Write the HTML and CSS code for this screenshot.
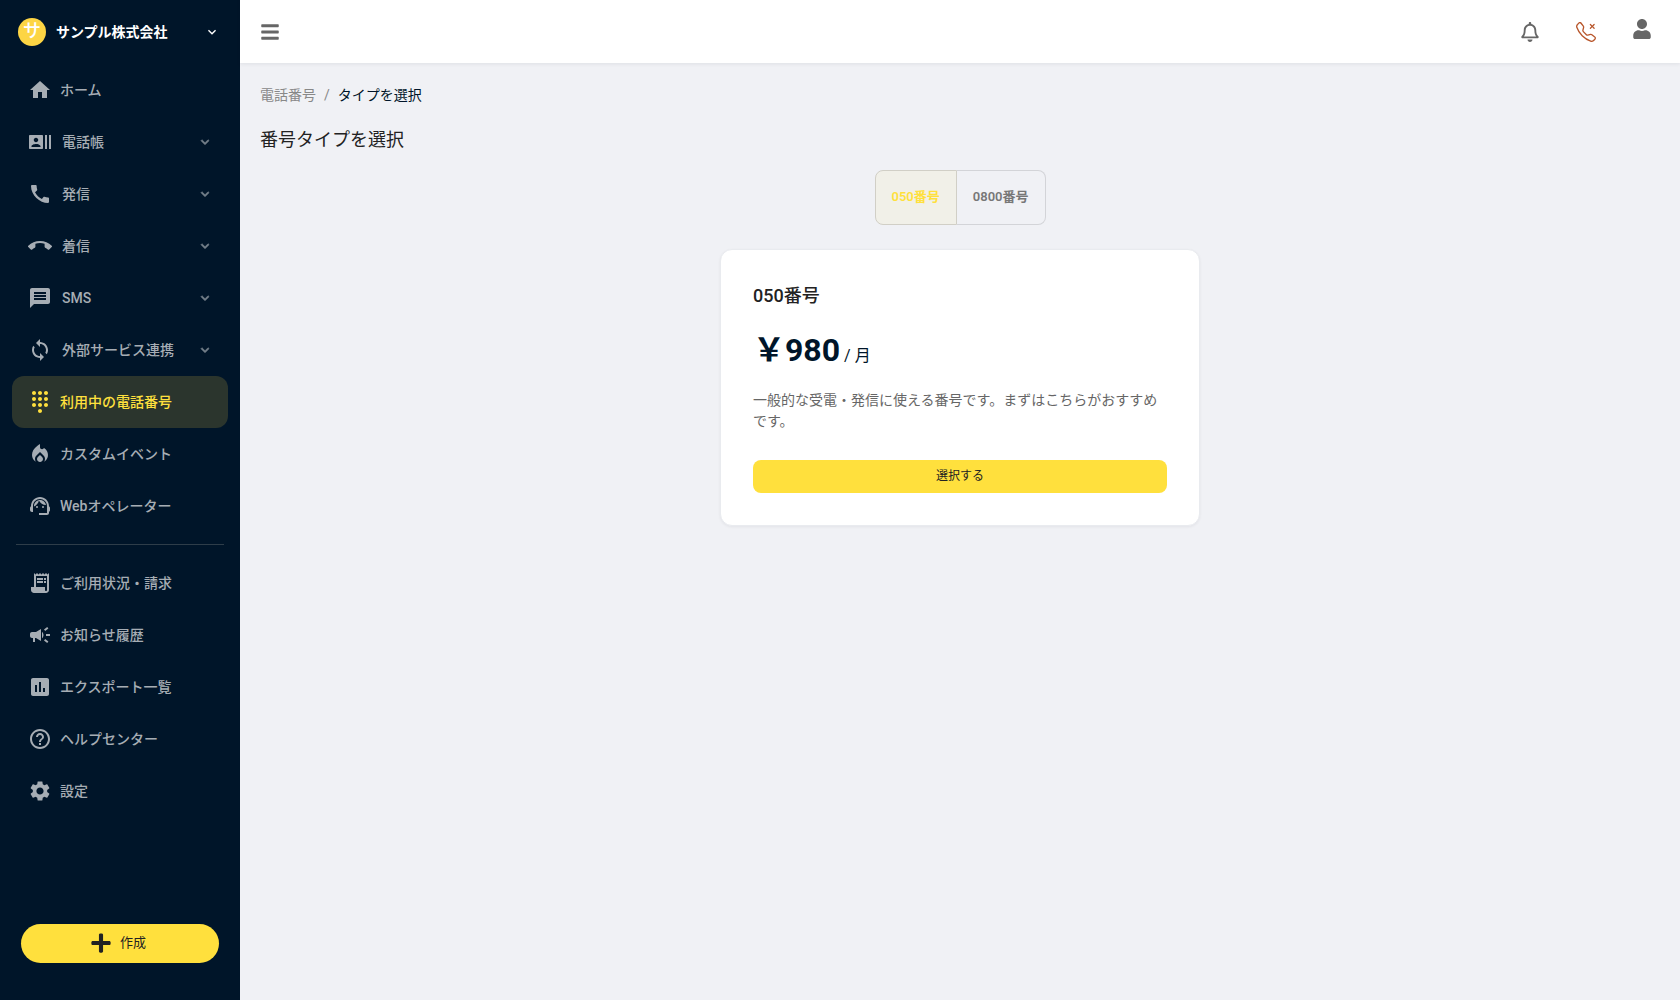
FILE: index.html
```html
<!DOCTYPE html>
<html lang="ja">
<head>
<meta charset="utf-8">
<meta name="viewport" content="width=device-width, initial-scale=1">
<title>番号タイプを選択</title>
<link rel="stylesheet" href="styles.css">
</head>
<body>
<div class="app">
  <aside class="sidebar">
    <button type="button" class="company">
      <span class="avatar">サ</span>
      <span class="company-name">サンプル株式会社</span>
      <svg class="chevron" viewBox="0 0 24 24"><path d="M7.41 8.59 12 13.17l4.59-4.58L18 10l-6 6-6-6z"/></svg>
    </button>
    <nav class="nav">
      <a class="nav-item" href="#"><svg class="icon" viewBox="0 0 24 24"><path d="M10 20v-6h4v6h5v-8h3L12 3 2 12h3v8z"/></svg><span>ホーム</span></a>
      <button type="button" class="nav-item nav-group"><svg class="icon" viewBox="0 0 24 24"><path d="M21 5v14h2V5h-2zm-4 14h2V5h-2v14zM14 5H2c-.55 0-1 .45-1 1v12c0 .55.45 1 1 1h12c.55 0 1-.45 1-1V6c0-.55-.45-1-1-1zM8 7.75c1.24 0 2.25 1.01 2.25 2.25S9.24 12.25 8 12.25 5.75 11.24 5.75 10 6.76 7.75 8 7.75zM12.5 17h-9v-.75c0-1.5 3-2.25 4.5-2.25s4.500.75 4.500 2.250V17z"/></svg><span>電話帳</span><svg class="chevron" viewBox="0 0 24 24"><path d="M7.41 8.59 12 13.17l4.59-4.58L18 10l-6 6-6-6z"/></svg></button>
      <button type="button" class="nav-item nav-group"><svg class="icon" viewBox="0 0 24 24"><path d="M20.010 15.380c-1.230 0-2.420-.2-3.530-.56-.35-.12-.74-.03-1.010.24l-1.570 1.970c-2.830-1.350-5.480-3.900-6.890-6.830l1.950-1.660c.27-.28.35-.67.240-1.020-.37-1.110-.56-2.300-.56-3.530 0-.54-.45-.99-.99-.99H4.190C3.650 3 3 3.240 3 3.990 3 13.280 11.730 21 20.010 21c.71 0 .99-.63.990-1.180v-3.450c0-.54-.45-.99-.99-.99z"/></svg><span>発信</span><svg class="chevron" viewBox="0 0 24 24"><path d="M7.410 8.590 12 13.170l4.590-4.580L18 10l-6 6-6-6z"/></svg></button>
      <button type="button" class="nav-item nav-group"><svg class="icon" viewBox="0 0 24 24"><path d="M12 9c-1.600 0-3.150.25-4.600.72v3.100c0 .39-.23.74-.56.9-.98.490-1.870 1.120-2.660 1.850-.18.180-.43.280-.70.280-.28 0-.53-.11-.71-.29L.290 13.080c-.18-.17-.29-.42-.29-.70 0-.28.110-.53.290-.71C3.340 8.780 7.460 7 12 7s8.660 1.780 11.710 4.670c.18.180.290.430.290.710 0 .28-.11.530-.29.710l-2.480 2.480c-.18.180-.43.290-.71.290-.27 0-.52-.11-.70-.28-.79-.74-1.690-1.360-2.670-1.850-.33-.16-.56-.50-.56-.90v-3.100C15.150 9.250 13.600 9 12 9z"/></svg><span>着信</span><svg class="chevron" viewBox="0 0 24 24"><path d="M7.410 8.590 12 13.170l4.590-4.580L18 10l-6 6-6-6z"/></svg></button>
      <button type="button" class="nav-item nav-group"><svg class="icon" viewBox="0 0 24 24"><path d="M20 2H4c-1.100 0-1.990.9-1.990 2L2 22l4-4h14c1.100 0 2-.9 2-2V4c0-1.100-.9-2-2-2zM6 6h12v2H6V6zm12 8H6v-2h12v2zm0-3H6V9h12v2z"/></svg><span>SMS</span><svg class="chevron" viewBox="0 0 24 24"><path d="M7.410 8.590 12 13.170l4.590-4.580L18 10l-6 6-6-6z"/></svg></button>
      <button type="button" class="nav-item nav-group"><svg class="icon" viewBox="0 0 24 24"><path d="M12 4V1L8 5l4 4V6c3.310 0 6 2.690 6 6 0 1.010-.25 1.970-.70 2.800l1.460 1.460C19.540 15.030 20 13.570 20 12c0-4.420-3.580-8-8-8zm0 14c-3.310 0-6-2.690-6-6 0-1.010.25-1.970.70-2.800L5.240 7.740C4.460 8.970 4 10.430 4 12c0 4.420 3.580 8 8 8v3l4-4-4-4v3z"/></svg><span>外部サービス連携</span><svg class="chevron" viewBox="0 0 24 24"><path d="M7.410 8.590 12 13.170l4.590-4.580L18 10l-6 6-6-6z"/></svg></button>
      <a class="nav-item active" href="#" aria-current="page"><svg class="icon" viewBox="0 0 24 24"><path d="M12 19c-1.100 0-2 .9-2 2s.9 2 2 2 2-.9 2-2-.9-2-2-2zM6 1c-1.100 0-2 .9-2 2s.9 2 2 2 2-.9 2-2-.9-2-2-2zm0 6c-1.100 0-2 .9-2 2s.9 2 2 2 2-.9 2-2-.9-2-2-2zm0 6c-1.100 0-2 .9-2 2s.9 2 2 2 2-.9 2-2-.9-2-2-2zm12-8c1.100 0 2-.9 2-2s-.9-2-2-2-2 .9-2 2 .9 2 2 2zm-6 8c-1.100 0-2 .9-2 2s.9 2 2 2 2-.9 2-2-.9-2-2-2zm6 0c-1.100 0-2 .9-2 2s.9 2 2 2 2-.9 2-2-.9-2-2-2zm0-6c-1.100 0-2 .9-2 2s.9 2 2 2 2-.9 2-2-.9-2-2-2zm-6 0c-1.100 0-2 .9-2 2s.9 2 2 2 2-.9 2-2-.9-2-2-2zm0-6c-1.100 0-2 .9-2 2s.9 2 2 2 2-.9 2-2-.9-2-2-2z"/></svg><span>利用中の電話番号</span></a>
      <a class="nav-item" href="#"><svg class="icon" viewBox="0 0 24 24"><path d="M12 12.900l-2.130 2.090C9.310 15.550 9 16.280 9 17.060 9 18.680 10.350 20 12 20s3-1.320 3-2.940c0-.78-.31-1.520-.87-2.070L12 12.900z"/><path d="M16 6l-.44.550C14.380 8.020 12 7.190 12 5.300V2S4 6 4 13c0 2.920 1.560 5.470 3.890 6.860-.56-.79-.89-1.760-.89-2.800 0-1.320.52-2.560 1.470-3.500L12 10.100l3.530 3.470c.95.930 1.470 2.170 1.470 3.500 0 1.020-.31 1.960-.85 2.750 1.890-1.150 3.290-3.060 3.710-5.300.66-3.550-1.070-6.900-3.860-8.520z"/></svg><span>カスタムイベント</span></a>
      <a class="nav-item" href="#"><svg class="icon" viewBox="0 0 24 24"><path d="M21 12.220C21 6.730 16.740 3 12 3c-4.690 0-9 3.650-9 9.280-.60.340-1 .98-1 1.720v2c0 1.100.9 2 2 2h1v-6.100c0-3.870 3.130-7 7-7s7 3.130 7 7V19h-8v2h8c1.100 0 2-.9 2-2v-1.220c.59-.31 1-.92 1-1.640v-2.300c0-.70-.41-1.310-1-1.620z"/><circle cx="9" cy="13" r="1"/><circle cx="15" cy="13" r="1"/><path d="M18 11.030C17.520 8.180 15.040 6 12.050 6c-3.030 0-6.290 2.510-6.030 6.450 2.470-1.010 4.330-3.210 4.860-5.890 1.310 2.630 4 4.440 7.120 4.470z"/></svg><span>Webオペレーター</span></a>
      <hr class="divider">
      <a class="nav-item" href="#"><svg class="icon" viewBox="0 0 24 24"><path d="M19.500 3.500 18 2l-1.500 1.500L15 2l-1.500 1.500L12 2l-1.500 1.500L9 2 7.500 3.500 6 2v14H3v3c0 1.660 1.340 3 3 3h12c1.660 0 3-1.340 3-3V2l-1.500 1.500zM19 19c0 .55-.45 1-1 1s-1-.45-1-1v-3H8V5h11v14z"/><path d="M9 7h6v2H9zm7 0h2v2h-2zm-7 3h6v2H9zm7 0h2v2h-2z"/></svg><span>ご利用状況・請求</span></a>
      <a class="nav-item" href="#"><svg class="icon" viewBox="0 0 24 24"><path d="M18 11v2h4v-2h-4zm-2 6.610c.96.710 2.210 1.650 3.200 2.390.40-.53.80-1.070 1.200-1.600-.99-.74-2.240-1.680-3.200-2.400-.40.540-.80 1.080-1.200 1.610zM20.400 5.600c-.40-.53-.80-1.070-1.200-1.600-.99.740-2.240 1.680-3.200 2.400.40.530.80 1.070 1.200 1.600.96-.72 2.210-1.650 3.200-2.400zM4 9c-1.100 0-2 .9-2 2v2c0 1.100.9 2 2 2h1v4h2v-4h1l5 3V6L8 9H4zm11.500 3c0-1.330-.58-2.530-1.500-3.350v6.690c.92-.81 1.500-2.010 1.500-3.340z"/></svg><span>お知らせ履歴</span></a>
      <a class="nav-item" href="#"><svg class="icon" viewBox="0 0 24 24"><path d="M19 3H5c-1.100 0-2 .9-2 2v14c0 1.100.9 2 2 2h14c1.100 0 2-.9 2-2V5c0-1.100-.9-2-2-2zM9 17H7v-7h2v7zm4 0h-2V7h2v10zm4 0h-2v-4h2v4z"/></svg><span>エクスポート一覧</span></a>
      <a class="nav-item" href="#"><svg class="icon" viewBox="0 0 24 24"><path d="M11 18h2v-2h-2v2zm1-16C6.480 2 2 6.480 2 12s4.480 10 10 10 10-4.480 10-10S17.520 2 12 2zm0 18c-4.410 0-8-3.590-8-8s3.590-8 8-8 8 3.590 8 8-3.590 8-8 8zm0-14c-2.210 0-4 1.790-4 4h2c0-1.100.9-2 2-2s2 .9 2 2c0 2-3 1.750-3 5h2c0-2.250 3-2.500 3-5 0-2.210-1.790-4-4-4z"/></svg><span>ヘルプセンター</span></a>
      <a class="nav-item" href="#"><svg class="icon" viewBox="0 0 24 24"><path d="M19.140 12.940c.04-.30.060-.61.060-.94 0-.32-.02-.64-.07-.94l2.030-1.580c.18-.14.230-.41.120-.61l-1.920-3.320c-.12-.22-.37-.29-.59-.22l-2.390.960c-.50-.38-1.030-.70-1.620-.94l-.36-2.540c-.04-.24-.24-.41-.48-.41h-3.840c-.24 0-.43.170-.47.410l-.36 2.540c-.59.240-1.130.570-1.620.940l-2.390-.96c-.22-.08-.47 0-.59.220L2.740 8.870c-.12.210-.08.470.12.610l2.030 1.580c-.05.300-.09.630-.09.940s.02.640.07.940l-2.030 1.580c-.18.140-.23.410-.12.610l1.920 3.320c.12.220.37.290.59.220l2.390-.96c.50.380 1.030.70 1.620.940l.36 2.540c.05.240.24.410.48.410h3.840c.24 0 .44-.17.470-.41l.36-2.540c.59-.24 1.130-.56 1.620-.94l2.390.960c.22.080.47 0 .59-.22l1.920-3.320c.12-.22.07-.47-.12-.61l-2.010-1.580zM12 15.600c-1.980 0-3.600-1.620-3.600-3.600s1.620-3.600 3.600-3.600 3.600 1.620 3.600 3.600-1.620 3.600-3.600 3.600z"/></svg><span>設定</span></a>
    </nav>
    <button type="button" class="create">
      <svg class="create-icon" viewBox="0 0 448 512"><path d="M416 208H272V64c0-17.670-14.330-32-32-32h-32c-17.670 0-32 14.330-32 32v144H32c-17.670 0-32 14.330-32 32v32c0 17.670 14.330 32 32 32h144v144c0 17.670 14.330 32 32 32h32c17.670 0 32-14.330 32-32V304h144c17.670 0 32-14.330 32-32v-32c0-17.670-14.330-32-32-32z"/></svg>
      <span>作成</span>
    </button>
  </aside>
  <div class="page">
    <header class="topbar">
      <button type="button" class="tool" aria-label="メニュー"><svg viewBox="0 0 448 512"><path d="M16 132h416c8.837 0 16-7.163 16-16V76c0-8.837-7.163-16-16-16H16C7.163 60 0 67.163 0 76v40c0 8.837 7.163 16 16 16zm0 160h416c8.837 0 16-7.163 16-16v-40c0-8.837-7.163-16-16-16H16c-8.837 0-16 7.163-16 16v40c0 8.837 7.163 16 16 16zm0 160h416c8.837 0 16-7.163 16-16v-40c0-8.837-7.163-16-16-16H16c-8.837 0-16 7.163-16 16v40c0 8.837 7.163 16 16 16z"/></svg></button>
      <div class="tools">
        <button type="button" class="tool" aria-label="通知"><svg viewBox="0 0 448 512"><path d="M439.390 362.290c-19.320-20.760-55.470-51.990-55.470-154.290 0-77.700-54.480-139.900-127.940-155.160V32c0-17.670-14.320-32-31.980-32s-31.980 14.330-31.980 32v20.840C118.560 68.100 64.080 130.300 64.080 208c0 102.300-36.150 133.530-55.470 154.290-6 6.450-8.660 14.160-8.610 21.710.11 16.400 12.980 32 32.100 32h383.800c19.120 0 32-15.600 32.100-32 .05-7.550-2.610-15.270-8.610-21.710zM67.530 368c21.220-27.970 44.420-74.330 44.530-159.420 0-.2-.06-.38-.06-.58 0-61.860 50.140-112 112-112s112 50.140 112 112c0 .2-.06.380-.06.580.11 85.100 23.310 131.460 44.530 159.420H67.530zM224 512c35.320 0 63.970-28.650 63.970-64H160.030c0 35.350 28.650 64 63.970 64z"/></svg></button>
        <button type="button" class="tool tool-phone" aria-label="電話オフライン"><svg viewBox="0 0 16 16"><path d="M3.654 1.328a.678.678 0 0 0-1.015-.063L1.605 2.300c-.483.484-.661 1.169-.45 1.770a17.568 17.568 0 0 0 4.168 6.608 17.569 17.569 0 0 0 6.608 4.168c.601.211 1.286.033 1.770-.45l1.034-1.034a.678.678 0 0 0-.063-1.015l-2.307-1.794a.678.678 0 0 0-.58-.122l-2.190.547a1.745 1.745 0 0 1-1.657-.459L5.482 8.062a1.745 1.745 0 0 1-.46-1.657l.548-2.190a.678.678 0 0 0-.122-.58L3.654 1.328zM1.884.511a1.745 1.745 0 0 1 2.612.163L6.290 2.980c.329.423.445.974.315 1.494l-.547 2.190a.678.678 0 0 0 .178.643l2.457 2.457a.678.678 0 0 0 .644.178l2.189-.547a1.745 1.745 0 0 1 1.494.315l2.306 1.794c.829.645.905 1.870.163 2.611l-1.034 1.034c-.74.740-1.846 1.065-2.877.702a18.634 18.634 0 0 1-7.010-4.420 18.634 18.634 0 0 1-4.420-7.009c-.362-1.030-.037-2.137.703-2.877L1.885.511z"/><path d="M11.146 1.646a.5.5 0 0 1 .708 0L13 2.793l1.146-1.147a.5.5 0 0 1 .708.708L13.707 3.500l1.147 1.146a.5.5 0 0 1-.708.708L13 4.207l-1.146 1.147a.5.5 0 0 1-.708-.708L12.293 3.500l-1.147-1.146a.5.5 0 0 1 0-.708z"/></svg></button>
        <button type="button" class="tool tool-user" aria-label="アカウント"><svg viewBox="0 0 448 512"><path d="M224 256c70.700 0 128-57.300 128-128S294.700 0 224 0 96 57.300 96 128s57.300 128 128 128zm89.600 32h-16.700c-22.200 10.200-46.900 16-72.900 16s-50.600-5.800-72.900-16h-16.700C60.200 288 0 348.200 0 422.400V464c0 26.500 21.500 48 48 48h352c26.500 0 48-21.500 48-48v-41.600c0-74.200-60.200-134.400-134.400-134.400z"/></svg></button>
      </div>
    </header>
    <main class="content">
      <nav class="breadcrumb"><a href="#">電話番号</a><span class="slash">/</span><span class="current">タイプを選択</span></nav>
      <h1 class="title">番号タイプを選択</h1>
      <div class="toggle">
        <button type="button" class="toggle-button selected" aria-pressed="true">050番号</button>
        <button type="button" class="toggle-button" aria-pressed="false">0800番号</button>
      </div>
      <section class="card">
        <h2 class="card-title">050番号</h2>
        <p class="price"><strong>￥980</strong><span> / 月</span></p>
        <p class="description">一般的な受電・発信に使える番号です。まずはこちらがおすすめです。</p>
        <button type="button" class="select">選択する</button>
      </section>
    </main>
  </div>
</div>
</body>
</html>
```
FILE: styles.css
```css
* { box-sizing: border-box; }

body {
  margin: 0;
  background: #f0f1f5;
  color: #222;
  font-family: Roboto, "Noto Sans CJK JP", sans-serif;
  font-size: 14px;
  line-height: 20px;
}

button {
  margin: 0;
  padding: 0;
  border: 0;
  background: none;
  color: inherit;
  font: inherit;
  cursor: pointer;
}

a { color: inherit; text-decoration: none; }
svg { display: block; fill: currentColor; }

.app { display: flex; min-height: 100vh; }

.sidebar {
  display: flex;
  flex: none;
  flex-direction: column;
  width: 240px;
  padding-bottom: 37px;
  background: #001529;
  color: #a6adb4;
}

.company {
  display: flex;
  align-items: center;
  gap: 10px;
  height: 64px;
  padding: 0 20px 0 18px;
  color: #fff;
  font-weight: 700;
  text-align: left;
}

.avatar {
  width: 28px;
  height: 28px;
  border-radius: 50%;
  background: #fdd544;
  font-size: 18px;
  font-weight: 500;
  line-height: 26px;
  text-align: center;
}

.chevron { width: 16px; height: 16px; margin-left: auto; }

.nav { padding: 0 12px; }

.nav-item {
  display: flex;
  align-items: center;
  gap: 8px;
  width: 100%;
  height: 52px;
  padding: 0 16px;
  border-radius: 12px;
  font-weight: 500;
}

.nav-group { gap: 10px; padding-right: 15px; }
.nav-group .chevron { opacity: .7; stroke: currentColor; }
.icon { flex: none; width: 24px; height: 24px; }
.active { background: #2b352d; color: #ffe03d; }

.divider {
  height: 1px;
  margin: 12px 4px;
  border: 0;
  background: #2e3d49;
}

.create {
  display: flex;
  align-items: center;
  justify-content: center;
  gap: 9px;
  height: 39px;
  margin: auto 21px 0;
  padding: 0 3px 2px 0;
  border-radius: 20px;
  background: #ffe03d;
  color: #222;
  font-size: 13px;
}

.create-icon { width: 20px; height: 22px; }

.page { flex: 1; min-width: 0; }

.topbar {
  display: flex;
  align-items: center;
  justify-content: space-between;
  height: 63px;
  padding: 0 28px 0 20px;
  background: #fff;
  box-shadow: 0 1px 4px rgba(0, 21, 41, .08);
  color: #666;
}

.tools { display: flex; align-items: center; gap: 36px; }
.tool svg { width: 20px; height: 20px; }
.tool-phone { color: #b8562b; }
.tool-user { padding-bottom: 6px; }

.content { padding: 22px 20px; }

.breadcrumb { display: flex; gap: 8px; color: #888; }
.current { color: #001529; }

.title {
  margin: 21px 0 16px;
  font-size: 18px;
  font-weight: 400;
  line-height: 28px;
}

.toggle { display: flex; justify-content: center; }

.toggle-button {
  height: 55px;
  padding: 0 16px 2px;
  border: 1px solid #d3d4d8;
  color: #777;
  font-size: 13px;
  font-weight: 600;
}

.toggle-button:first-child { border-radius: 8px 0 0 8px; }
.toggle-button:last-child { border-left: 0; border-radius: 0 8px 8px 0; }
.toggle .selected { border-color: #d1cfc6; background: #f1f0e8; color: #ffe03d; }

.card {
  width: 100%;
  max-width: 480px;
  margin: 24px auto 0;
  padding: 32px;
  border: 1px solid #e9ebef;
  border-radius: 12px;
  background: #fff;
  box-shadow: 0 1px 3px rgba(0, 21, 41, .06);
}

.card-title {
  margin: 0;
  font-size: 18px;
  font-weight: 500;
  line-height: 28px;
}

.price {
  margin: 16px 0 10px;
  color: #001529;
  font-size: 16px;
  line-height: 48px;
}

.price strong { font-size: 32px; font-weight: 700; }

.description { margin: 0 0 28px; color: #666; line-height: 21px; }

.select {
  display: block;
  width: 100%;
  height: 33px;
  padding-bottom: 2px;
  border-radius: 8px;
  background: #ffe03d;
  color: #222;
  font-size: 12px;
  font-weight: 400;
}
```
